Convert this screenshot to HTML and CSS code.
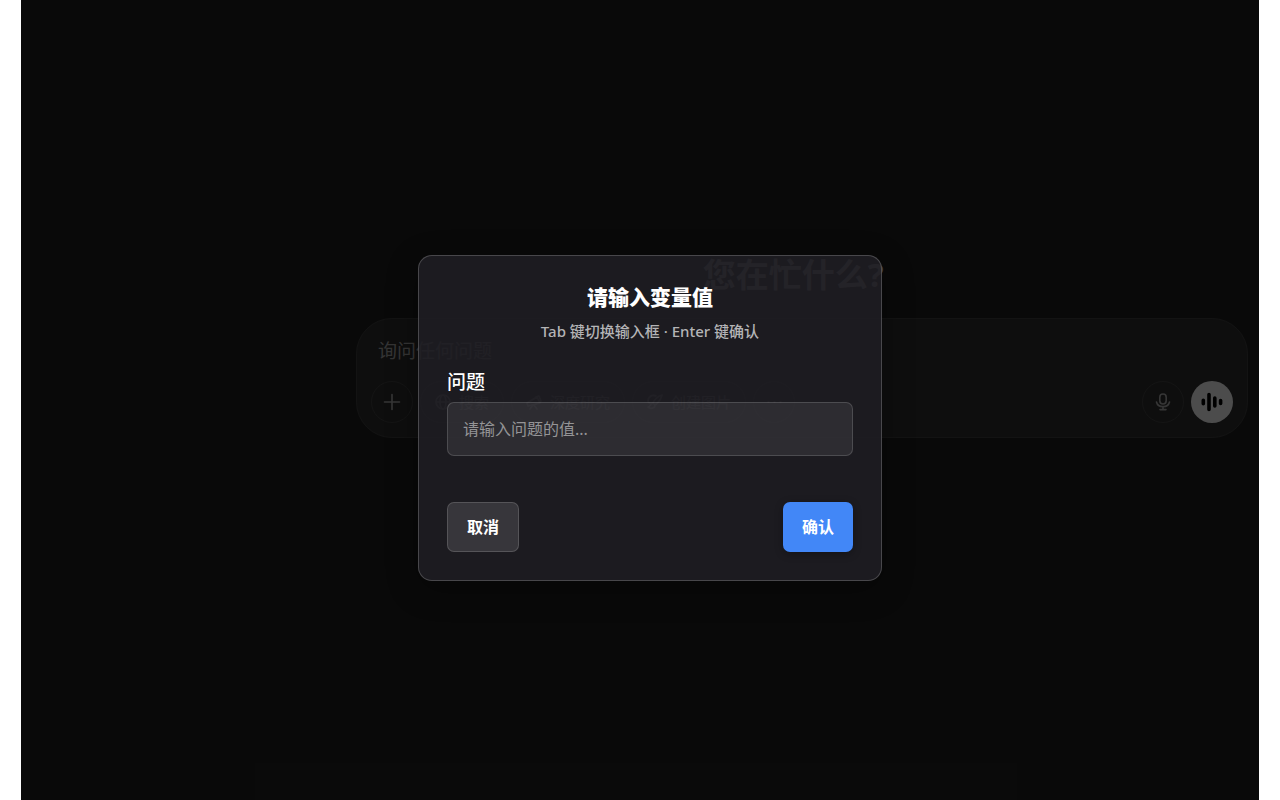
FILE: index.html
```html
<!DOCTYPE html>
<html lang="zh-CN">
<head>
	<meta charset="UTF-8">
	<meta name="viewport" content="width=device-width, initial-scale=1">
	<title>请输入变量值</title>
	<link rel="stylesheet" href="styles.css">
</head>
<body>
	<div class="page">
		<main class="chat">
			<h1>您在忙什么?</h1>
			<form class="composer">
				<input type="text" class="ask" placeholder="询问任何问题" aria-label="询问任何问题">
				<div class="tools">
					<button type="button" class="round" aria-label="添加">
						<svg width="20" height="20" viewBox="0 0 20 20"><path d="M10 2.500v15M2.500 10h15"/></svg>
					</button>
					<button type="button" class="chip">
						<svg width="16" height="16" viewBox="0 0 16 16"><circle cx="8" cy="8" r="7"/><ellipse cx="8" cy="8" rx="3" ry="7"/><path d="M1 8h14"/></svg>
						搜索
					</button>
					<button type="button" class="chip">
						<svg width="16" height="16" viewBox="0 0 16 16"><path d="M1 9l10-6 3 6-12 3zM10 3l3-1 2 5-1 2M7 11l-3 4M8 11l3 4"/></svg>
						深度研究
					</button>
					<button type="button" class="chip">
						<svg width="16" height="16" viewBox="0 0 16 16"><path d="M15 1C11 2 7 6 6 9l2 2c3-2 6-6 7-10zM6 9c-3 0-2 4-5 4 2 2 7 2 7-2M9 2C5 0 1 3 1 7c0 1 1 2 2 2"/></svg>
						创建图片
					</button>
					<button type="button" class="round" aria-label="更多">
						<svg width="20" height="20" viewBox="0 0 20 20"><path d="M4 10h1M10 10h1M16 10h1"/></svg>
					</button>
					<button type="button" class="round mic" aria-label="听写">
						<svg width="18" height="18" viewBox="0 0 18 18"><rect x="5.8" y="1" width="6.4" height="10" rx="3.2"/><path d="M2.500 9c.7 3 3.200 4.600 6.500 4.600s5.800-1.600 6.500-4.600M9 13.600v2.900M6 16.600h6"/></svg>
					</button>
					<button type="button" class="round voice" aria-label="语音模式">
						<svg width="24" height="24" viewBox="0 0 24 24"><path d="M3.300 10.300v3.400M9 4.500v15M14.800 8v8M20.600 10.500v3"/></svg>
					</button>
				</div>
			</form>
		</main>

		<div class="overlay">
			<form class="modal" role="dialog" aria-labelledby="modal_title">
				<h2 id="modal_title">请输入变量值</h2>
				<p>Tab 键切换输入框 · Enter 键确认</p>
				<label for="question">问题</label>
				<input type="text" id="question" placeholder="请输入问题的值...">
				<div class="actions">
					<button type="button" class="cancel">取消</button>
					<button type="submit" class="confirm">确认</button>
				</div>
			</form>
		</div>
	</div>
</body>
</html>
```
FILE: styles.css
```css
*{padding:0;margin:0;box-sizing:border-box;}
body{
	background:#fff;
	color:#fff;
	font-family:"Noto Sans","Noto Sans CJK SC",sans-serif;
}
button,input{font-family:inherit;color:inherit;outline:none;}
svg{
	flex:none;
	fill:none;
	stroke:currentColor;
	stroke-width:1.6;
	stroke-linecap:round;
	stroke-linejoin:round;
}
.page{
	position:relative;
	display:flex;
	min-height:100vh;
	margin:0 21px;
	background:#212121;
}

/* chat behind the dialog */
.chat{
	flex:1;
	display:flex;
	flex-direction:column;
	justify-content:center;
	margin-left:323px;
	padding:0 11px 108px 12px;
}
.chat h1{
	margin-bottom:23px;
	padding-right:18px;
	font-size:33px;
	line-height:40px;
	text-align:center;
}
.composer{
	display:flex;
	flex-direction:column;
	gap:12px;
	padding:14px;
	border:1px solid #414141;
	border-radius:36px;
	background:#303030;
}
.ask{
	height:36px;
	padding:0 7px;
	border:none;
	background:none;
	font-size:19px;
}
.ask::placeholder{color:#afafaf;}
.tools{
	display:flex;
	gap:7px;
}
.round,.chip{
	display:flex;
	align-items:center;
	justify-content:center;
	gap:8px;
	height:42px;
	border:1px solid #454545;
	border-radius:21px;
	background:none;
	color:#b4b4b4;
}
.round{width:42px;}
.chip{
	padding:0 14px;
	font-size:15px;
}
.mic{margin-left:auto;}
.voice{
	border:none;
	background:#fff;
	color:#000;
}
.voice svg{stroke-width:3.6;}

/* dialog */
.overlay{
	position:absolute;
	inset:0;
	display:flex;
	align-items:center;
	justify-content:center;
	padding:36px 0 0 20px;
	background:rgba(0,0,0,.7);
}
.modal{
	width:464px;
	max-width:100%;
	padding:28px;
	border:1px solid rgba(255,255,255,.2);
	border-radius:14px;
	background:rgba(31,30,35,.88);
	box-shadow:0 8px 32px rgba(0,0,0,.3);
}
.modal h2{
	font-size:21px;
	font-weight:800;
	line-height:26px;
	text-align:center;
}
.modal p{
	margin:10px 0 28px;
	color:#b4b4b6;
	font-size:15px;
	font-weight:500;
	line-height:22px;
	text-align:center;
}
.modal label{
	display:block;
	margin-bottom:8px;
	font-size:19px;
	font-weight:500;
	line-height:24px;
}
.modal input{
	display:block;
	width:100%;
	height:54px;
	padding:0 15px;
	border:1px solid rgba(255,255,255,.15);
	border-radius:7px;
	background:rgba(255,255,255,.08);
	font-size:16px;
}
.modal input::placeholder{color:#949496;}
.actions{
	display:flex;
	justify-content:space-between;
	margin-top:46px;
}
.actions button{
	height:50px;
	padding:0 19px 2px;
	border:1px solid rgba(255,255,255,.15);
	border-radius:7px;
	background:rgba(255,255,255,.12);
	font-size:16px;
	font-weight:600;
}
.actions .confirm{
	border:none;
	background:#4287f7;
	box-shadow:0 2px 8px rgba(0,0,0,.3);
}
```
